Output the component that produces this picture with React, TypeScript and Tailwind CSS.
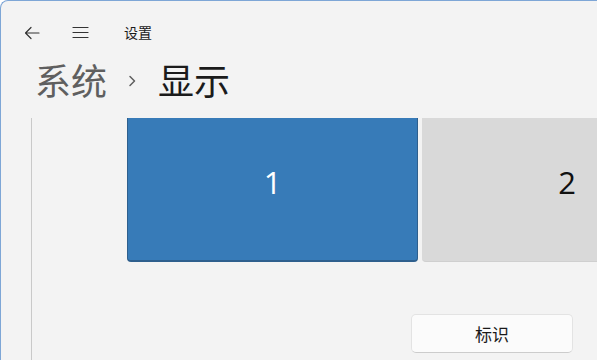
export default function App() {
  return (
    <div className="relative h-[360px] w-[597px] overflow-hidden rounded-tl-[8px] border-l border-t border-[#7ea6d6] bg-[#f3f3f3] font-['Noto_Sans_CJK_SC',sans-serif] text-[#1a1a1a]">
      {/* title bar */}
      <div className="flex h-[63px] items-center">
        <div className="ml-[22px] flex h-[20px] w-[18px] items-center justify-center">
          <svg width="16" height="14" viewBox="0 0 16 14" fill="none" stroke="#333" strokeWidth="1.2" strokeLinecap="round" strokeLinejoin="round">
            <path d="M15 7H1.5M7 1.5L1.5 7L7 12.5" />
          </svg>
        </div>
        <div className="ml-[30px] flex h-[20px] w-[18px] items-center justify-center">
          <svg width="17" height="13" viewBox="0 0 17 13" fill="none" stroke="#333" strokeWidth="1.2" strokeLinecap="round">
            <path d="M1 1.5H16M1 6.5H16M1 11.5H16" />
          </svg>
        </div>
        <span className="ml-[35px] pb-[2px] text-[14px] leading-none">设置</span>
      </div>

      {/* breadcrumb */}
      <div className="flex h-[54px] items-center pb-[24px] pl-[34px] text-[36px] leading-none">
        <span className="text-[#5f5f5f]">系统</span>
        <svg className="mx-[21px] mt-[4px]" width="9" height="12" viewBox="0 0 9 12" fill="none" stroke="#5f5f5f" strokeWidth="1.5" strokeLinecap="round" strokeLinejoin="round">
          <path d="M2 1.5L6.5 6L2 10.5" />
        </svg>
        <span className="text-[#1b1b1b]">显示</span>
      </div>

      {/* content */}
      <div className="ml-[30px] flex h-[242px] flex-col border-l border-[#c9c9c9]">
        <div className="flex gap-[4px] pl-[95px]">
          <div className="flex h-[144px] w-[291px] shrink-0 items-center justify-center rounded-b-[4px] border-b-2 border-l border-r border-[#2e5f8d] bg-[#377bb8] pb-[14px] font-['Open_Sans',sans-serif] text-[31px] leading-none text-white">
            1
          </div>
          <div className="flex h-[144px] w-[290px] shrink-0 items-center justify-center rounded-b-[4px] border-b border-[#cfcfcf] bg-[#d9d9d9] pb-[14px] font-['Open_Sans',sans-serif] text-[31px] leading-none text-[#111]">
            2
          </div>
        </div>
        <div className="mt-[52px] flex justify-end pr-[24px]">
          <button className="flex h-[39px] w-[162px] items-center justify-center rounded-[5px] border border-[#e3e3e3] border-b-[#cccccc] bg-[#fbfbfb] text-[17px] text-[#1a1a1a]">
            标识
          </button>
        </div>
      </div>
    </div>
  );
}
